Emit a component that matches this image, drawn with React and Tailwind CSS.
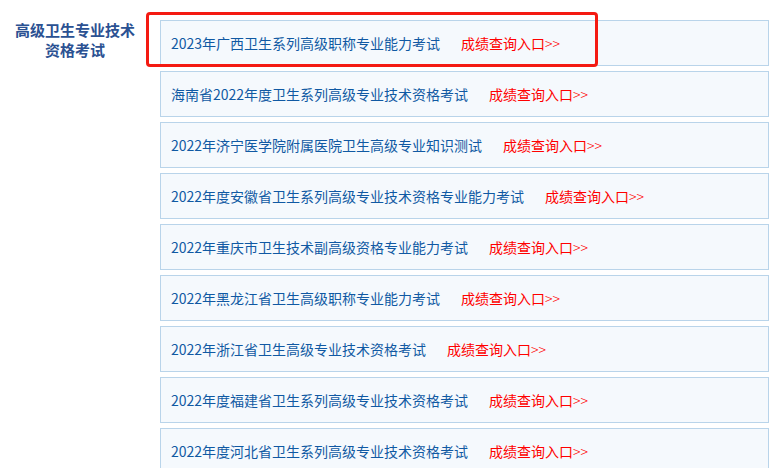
import React from 'react';

const EXAMS = [
  '2023年广西卫生系列高级职称专业能力考试',
  '海南省2022年度卫生系列高级专业技术资格考试',
  '2022年济宁医学院附属医院卫生高级专业知识测试',
  '2022年度安徽省卫生系列高级专业技术资格专业能力考试',
  '2022年重庆市卫生技术副高级资格专业能力考试',
  '2022年黑龙江省卫生高级职称专业能力考试',
  '2022年浙江省卫生高级专业技术资格考试',
  '2022年度福建省卫生系列高级专业技术资格考试',
  '2022年度河北省卫生系列高级专业技术资格考试',
];

function ExamRow({ name, highlight }) {
  return (
    <div className="relative">
      <div className="h-[46px] flex items-center pl-[10px] border border-[#b9d4ea] bg-[#f5f9fd] text-[14px] leading-none">
        <a href="#" className="text-[#1059a3]">{name}</a>
        <a href="#" className="ml-[21px] text-[#ff0000]">成绩查询入口<span className="font-light">&gt;&gt;</span></a>
      </div>
      {highlight && (
        <div className="absolute left-[-14px] top-[-8px] w-[452px] h-[55px] border-[3px] border-[#f41a12] rounded-[4px] pointer-events-none" />
      )}
    </div>
  );
}

export default function App() {
  return (
    <div className="w-[783px] h-[468px] overflow-hidden bg-white flex" style={{ fontFamily: '"Noto Sans CJK SC", "Liberation Sans", sans-serif' }}>
      <div className="w-[150px] shrink-0 pt-[20px] text-center">
        <h3 className="text-[15px] leading-[20px] font-bold text-[#2b5192]">
          高级卫生专业技术<br />资格考试
        </h3>
      </div>
      <div className="ml-[10px] w-[609px] pt-[20px] flex flex-col gap-[5px]">
        {EXAMS.map((name, i) => (
          <ExamRow key={name} name={name} highlight={i === 0} />
        ))}
      </div>
    </div>
  );
}
